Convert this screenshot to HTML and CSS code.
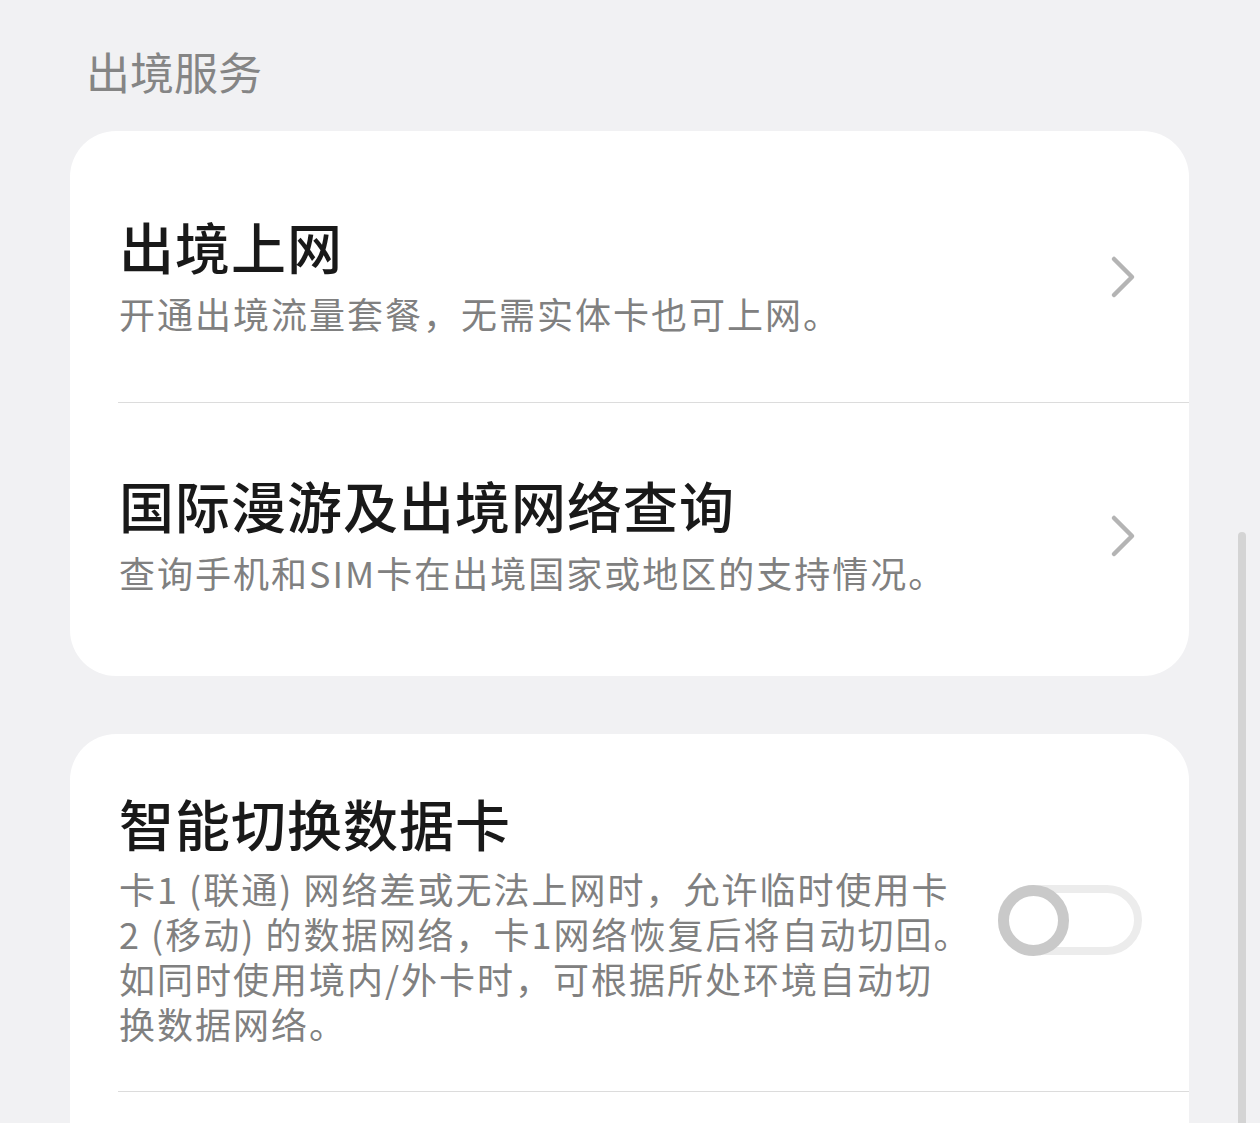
FILE: index.html
```html
<!DOCTYPE html>
<html lang="zh-CN">
<head>
    <meta charset="UTF-8">
    <title>出境服务</title>

    <link rel="stylesheet" href="styles.css">
</head>
<body>

<div class="page">
    <h2 class="section-title">出境服务</h2>

    <div class="card">
        <div class="row">
            <div class="row-text">
                <div class="row-title">出境上网</div>
                <div class="row-sub">开通出境流量套餐，无需实体卡也可上网。</div>
            </div>
            <svg class="chevron" width="26" height="44" viewBox="0 0 26 44">
                <path d="M4 4 L22 22 L4 40" fill="none" stroke="#b4b4b4" stroke-width="4.5" stroke-linecap="round" stroke-linejoin="round"/>
            </svg>
        </div>

        <div class="divider"></div>

        <div class="row">
            <div class="row-text">
                <div class="row-title">国际漫游及出境网络查询</div>
                <div class="row-sub">查询手机和SIM卡在出境国家或地区的支持情况。</div>
            </div>
            <svg class="chevron" width="26" height="44" viewBox="0 0 26 44">
                <path d="M4 4 L22 22 L4 40" fill="none" stroke="#b4b4b4" stroke-width="4.5" stroke-linecap="round" stroke-linejoin="round"/>
            </svg>
        </div>
    </div>

    <div class="card">
        <div class="row row-switch">
            <div class="row-text">
                <div class="row-title">智能切换数据卡</div>
                <div class="row-desc">
                    卡1 (联通) 网络差或无法上网时，允许临时使用卡<br>
                    2 (移动) 的数据网络，卡1网络恢复后将自动切回。<br>
                    如同时使用境内/外卡时，可根据所处环境自动切<br>
                    换数据网络。
                </div>
            </div>
            <div class="switch"></div>
        </div>

        <div class="divider"></div>

        <div class="row-more"></div>
    </div>
</div>

<div class="scrollbar"></div>

</body>
</html>
```

FILE: styles.css
```css
html, body {
    height: 1123px;
    overflow: hidden;
}

body {
    margin: 0;
    background: #f1f1f3;
    font-family: "Noto Sans CJK SC", "Noto Sans", sans-serif;
    color: #1a1a1a;
}

.page {
    padding: 43px 71px 0 70px;
}

.section-title {
    margin: 0 0 31px 16px;
    font-size: 44px;
    line-height: 57px;
    font-weight: 400;
    color: #858585;
}

.card {
    background: #fff;
    border-radius: 46px;
    padding: 13px 0 15px;
    margin-bottom: 58px;
}

.row {
    display: flex;
    align-items: center;
    padding: 65px 53px 65px 49px;
}

.row-text {
    flex: 1;
    min-width: 0;
}

.row-title {
    font-size: 55px;
    line-height: 72px;
    font-weight: 500;
    letter-spacing: 1px;
    color: #191919;
}

.row-sub {
    margin-top: 8px;
    font-size: 36px;
    line-height: 48px;
    letter-spacing: 2px;
    color: #808080;
}

.chevron {
    flex-shrink: 0;
    margin-top: 8px;
}

.divider {
    height: 1px;
    margin-left: 48px;
    background: #dcdcdc;
}

.row-switch {
    padding: 39px 47px 45px 49px;
}

.row-desc {
    margin-top: 8px;
    font-size: 36px;
    line-height: 45px;
    letter-spacing: 2px;
    color: #808080;
    white-space: nowrap;
}

.switch {
    position: relative;
    flex-shrink: 0;
    width: 144px;
    height: 70px;
    margin: 8px 0 0 38px;
    border: 8px solid #ececec;
    border-radius: 35px;
    box-sizing: border-box;
}

.switch::before {
    content: "";
    position: absolute;
    left: -8px;
    top: -8px;
    width: 71px;
    height: 71px;
    border: 11px solid #c9c9c9;
    border-radius: 50%;
    background: #fff;
    box-sizing: border-box;
}

.row-more {
    height: 120px;
}

.scrollbar {
    position: fixed;
    right: 14px;
    top: 532px;
    bottom: 0;
    width: 8px;
    border-radius: 4px 4px 0 0;
    background: #d4d4d4;
}
```
